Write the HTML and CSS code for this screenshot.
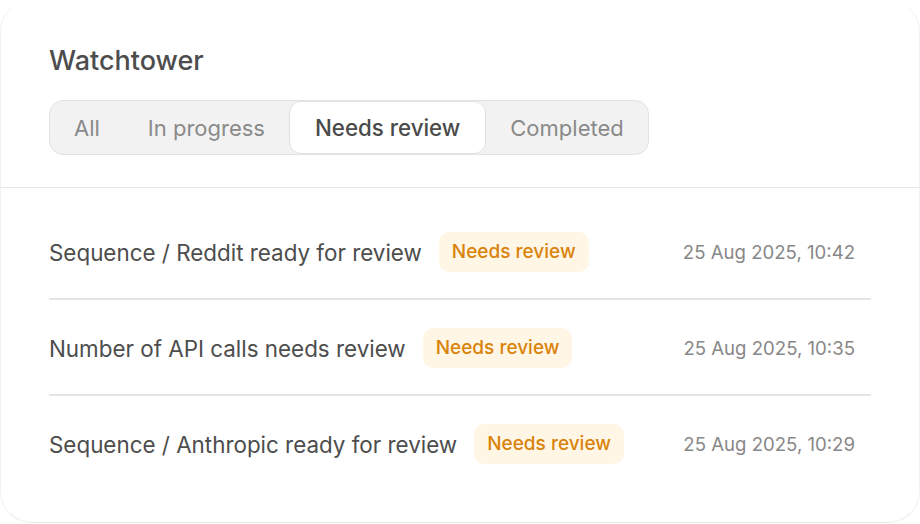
FILE: index.html
```html
<!DOCTYPE html>
<html lang="en">
<head>
<meta charset="utf-8">
<title>Watchtower</title>
<link rel="stylesheet" href="styles.css">
</head>
<body>
<div class="card">
  <header class="header">
    <h1 class="title">Watchtower</h1>
    <div class="tabs">
      <span class="tab">All</span>
      <span class="tab">In progress</span>
      <span class="tab active">Needs review</span>
      <span class="tab">Completed</span>
    </div>
  </header>
  <ul class="list">
    <li class="row">
      <div class="main"><span class="name">Sequence / Reddit ready for review</span><span class="badge">Needs review</span></div>
      <span class="date">25 Aug 2025, 10:42</span>
    </li>
    <li class="row">
      <div class="main"><span class="name">Number of API calls needs review</span><span class="badge">Needs review</span></div>
      <span class="date">25 Aug 2025, 10:35</span>
    </li>
    <li class="row">
      <div class="main"><span class="name">Sequence / Anthropic ready for review</span><span class="badge">Needs review</span></div>
      <span class="date">25 Aug 2025, 10:29</span>
    </li>
  </ul>
</div>
</body>
</html>
```
FILE: styles.css
```css
* { box-sizing: border-box; }
html, body { margin: 0; padding: 0; background: #fff; }
body { font-family: Inter, "Noto Sans", sans-serif; color: #4a4a4a; }
.card {
  width: 920px;
  height: 523px;
  border: 1px solid #f1f1f1;
  border-top: none;
  border-bottom-color: #e9e9e9;
  border-radius: 32px;
  background: #fff;
  overflow: hidden;
}
.header {
  padding: 45px 48px 32px;
  border-bottom: 1px solid #e8e8e8;
}
.title {
  margin: 0 0 23px;
  font-size: 27px;
  line-height: 32px;
  font-weight: 500;
  color: #4d4d4d;
}
.tabs {
  display: inline-flex;
  vertical-align: top;
  background: #f2f2f2;
  border: 1px solid #e2e2e2;
  border-radius: 14px;
}
.tab {
  padding: 0 23px;
  height: 53px;
  display: flex;
  align-items: center;
  font-size: 22px;
  color: #8a8a8a;
  border: 1px solid transparent;
  border-radius: 12px;
}
.tab.active {
  padding: 0 25px;
  background: #fff;
  color: #4a4a4a;
  border-color: #e2e2e2;
  font-weight: 500;
  font-size: 22.3px;
}
.list {
  list-style: none;
  margin: 0 48px;
  padding: 16px 0 0;
}
.row {
  box-sizing: content-box;
  height: 94px;
  display: flex;
  align-items: center;
  justify-content: space-between;
  padding: 0 16px 0 0;
}
.row + .row { border-top: 2px solid #e4e4e4; }
.main { display: flex; align-items: center; gap: 17px; padding-top: 2px; }
.name { font-size: 22.4px; color: #4d4d4d; }
.badge {
  background: #fff6e5;
  color: #d9830b;
  font-size: 19px;
  font-weight: 500;
  padding: 0 13px;
  height: 40px;
  line-height: 40px;
  border-radius: 10px;
}
.date { font-size: 18.6px; color: #888; padding-top: 2px; }
```
